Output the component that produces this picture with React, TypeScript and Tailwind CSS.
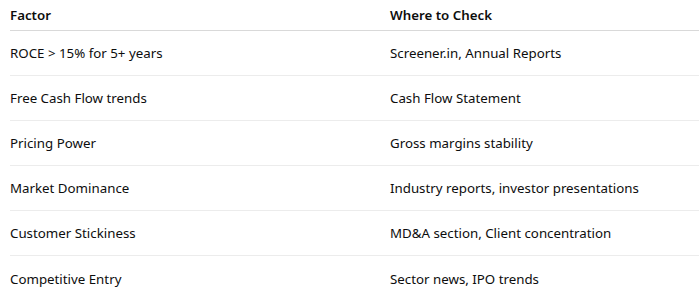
import React from 'react';

const rows = [
  ['ROCE > 15% for 5+ years', 'Screener.in, Annual Reports'],
  ['Free Cash Flow trends', 'Cash Flow Statement'],
  ['Pricing Power', 'Gross margins stability'],
  ['Market Dominance', 'Industry reports, investor presentations'],
  ['Customer Stickiness', 'MD&A section, Client concentration'],
  ['Competitive Entry', 'Sector news, IPO trends'],
];

export default function App() {
  return (
    <div className="w-[699px] h-[304px] overflow-hidden bg-white pl-[10px] font-['Segoe_UI','Noto_Sans',sans-serif] text-[13.3px] text-[#0d0d0d]">
      {/* Header */}
      <div className="grid grid-cols-[380px_1fr] h-[31px] pt-[2px] items-center border-b border-[#d9d9d9] font-semibold">
        <div>Factor</div>
        <div>Where to Check</div>
      </div>

      {/* Rows */}
      {rows.map(([factor, where], i) => (
        <div
          key={i}
          className={`grid grid-cols-[380px_1fr] h-[45px] pt-[2px] items-center ${
            i < rows.length - 1 ? 'border-b border-[#ececec]' : ''
          }`}
        >
          <div>{factor}</div>
          <div>{where}</div>
        </div>
      ))}
    </div>
  );
}
